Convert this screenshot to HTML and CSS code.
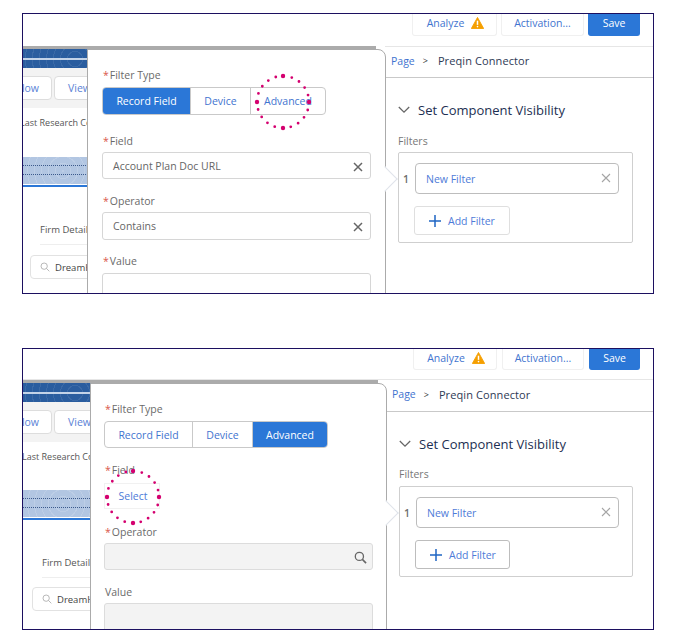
FILE: index.html
```html
<!DOCTYPE html>
<html lang="en">
<head>
<meta charset="utf-8">
<title>Set Component Visibility</title>
<link rel="stylesheet" href="styles.css">
</head>
<body>
<main class="sheet">

<section class="shot shot-a">
  <header class="topbar">
    <button class="tbtn tbtn-analyze">Analyze
      <svg class="warn" viewBox="0 0 14 13"><path d="M7 .5 13.7 12.5H.3Z" fill="#f59f00" stroke="#f59f00" stroke-linejoin="round"/><path d="M7 4v4.5" stroke="#fff" stroke-width="1.6"/><circle cx="7" cy="10.4" r=".9" fill="#fff"/></svg>
    </button>
    <button class="tbtn tbtn-activation">Activation...</button>
    <button class="tbtn tbtn-save">Save</button>
  </header>
  <div class="work">
    <div class="stage">
      <div class="hero"><i class="hero-line"></i></div>
      <div class="actions"><span class="abtn abtn-follow">Follow</span><span class="abtn abtn-view">View</span></div>
      <p class="research">Last Research Contact</p>
      <div class="band"><i class="band-dots"></i><i class="band-dots"></i></div>
      <p class="firm">Firm Details</p>
      <div class="search">
        <svg class="search-ico" viewBox="0 0 12 12"><circle cx="5" cy="5" r="3.8" fill="none" stroke="#aaa"/><path d="m7.8 7.8 3.4 3.4" stroke="#aaa"/></svg>
        <span>DreamHost</span>
      </div>
    </div>
    <aside class="props">
      <nav class="crumbs"><a>Page</a><b>&gt;</b><span>Preqin Connector</span></nav>
      <div class="section">
        <h2 class="title"><svg class="chev" viewBox="0 0 12 8"><path d="m.8 1 5.2 5.2L11.2 1" fill="none" stroke="#666" stroke-width="1.3"/></svg>Set Component Visibility</h2>
        <p class="filters-label">Filters</p>
        <div class="filters">
          <div class="filter-row"><span class="num">1</span>
            <div class="filter-card"><span>New Filter</span>
              <svg class="x-light" viewBox="0 0 10 10"><path d="m1 1 8 8M9 1 1 9" stroke="#a5a5a5" stroke-width="1.1"/></svg>
            </div>
          </div>
          <button class="add"><svg class="plus" viewBox="0 0 12 12"><path d="M6 0v12M0 6h12" stroke="#1f66c4" stroke-width="1.5"/></svg>Add Filter</button>
        </div>
      </div>
    </aside>
  </div>
  <div class="pop">
    <i class="nub"></i>
    <label class="lab"><em>*</em>Filter Type</label>
    <div class="seg">
      <span class="seg-i seg-record on">Record Field</span><span class="seg-i seg-device">Device</span><span class="seg-i seg-adv">Advanced</span>
    </div>
    <label class="lab lab-field"><em>*</em>Field</label>
    <div class="inp inp-field"><span>Account Plan Doc URL</span>
      <svg class="x-dark" viewBox="0 0 10 10"><path d="m1 1 8 8M9 1 1 9" stroke="#666" stroke-width="1.5"/></svg>
    </div>
    <label class="lab lab-op"><em>*</em>Operator</label>
    <div class="inp inp-op"><span>Contains</span>
      <svg class="x-dark" viewBox="0 0 10 10"><path d="m1 1 8 8M9 1 1 9" stroke="#666" stroke-width="1.5"/></svg>
    </div>
    <label class="lab lab-val"><em>*</em>Value</label>
    <div class="inp inp-val"></div>
  </div>
  <svg class="ring ring-a" viewBox="0 0 60 60"><circle class="ring-dots" cx="30" cy="30" r="26"/><circle class="ring-big" cx="30" cy="4" r="2.2"/><circle class="ring-big" cx="30" cy="56" r="2.2"/><circle class="ring-big" cx="4" cy="30" r="2.2"/><circle class="ring-big" cx="56" cy="30" r="2.2"/></svg>
</section>

<section class="shot shot-b">
  <header class="topbar">
    <button class="tbtn tbtn-analyze">Analyze
      <svg class="warn" viewBox="0 0 14 13"><path d="M7 .5 13.7 12.5H.3Z" fill="#f59f00" stroke="#f59f00" stroke-linejoin="round"/><path d="M7 4v4.5" stroke="#fff" stroke-width="1.6"/><circle cx="7" cy="10.4" r=".9" fill="#fff"/></svg>
    </button>
    <button class="tbtn tbtn-activation">Activation...</button>
    <button class="tbtn tbtn-save">Save</button>
  </header>
  <div class="work">
    <div class="stage">
      <div class="hero"><i class="hero-line"></i></div>
      <div class="actions"><span class="abtn abtn-follow">Follow</span><span class="abtn abtn-view">View</span></div>
      <p class="research">Last Research Contact</p>
      <div class="band"><i class="band-dots"></i><i class="band-dots"></i></div>
      <p class="firm">Firm Details</p>
      <div class="search">
        <svg class="search-ico" viewBox="0 0 12 12"><circle cx="5" cy="5" r="3.8" fill="none" stroke="#aaa"/><path d="m7.8 7.8 3.4 3.4" stroke="#aaa"/></svg>
        <span>DreamHost</span>
      </div>
    </div>
    <aside class="props">
      <nav class="crumbs"><a>Page</a><b>&gt;</b><span>Preqin Connector</span></nav>
      <div class="section">
        <h2 class="title"><svg class="chev" viewBox="0 0 12 8"><path d="m.8 1 5.2 5.2L11.2 1" fill="none" stroke="#666" stroke-width="1.3"/></svg>Set Component Visibility</h2>
        <p class="filters-label">Filters</p>
        <div class="filters">
          <div class="filter-row"><span class="num">1</span>
            <div class="filter-card"><span>New Filter</span>
              <svg class="x-light" viewBox="0 0 10 10"><path d="m1 1 8 8M9 1 1 9" stroke="#a5a5a5" stroke-width="1.1"/></svg>
            </div>
          </div>
          <button class="add"><svg class="plus" viewBox="0 0 12 12"><path d="M6 0v12M0 6h12" stroke="#1f66c4" stroke-width="1.5"/></svg>Add Filter</button>
        </div>
      </div>
    </aside>
  </div>
  <div class="pop">
    <i class="nub"></i>
    <label class="lab"><em>*</em>Filter Type</label>
    <div class="seg">
      <span class="seg-i seg-record">Record Field</span><span class="seg-i seg-device">Device</span><span class="seg-i seg-adv on">Advanced</span>
    </div>
    <label class="lab lab-field"><em>*</em>Field</label>
    <div class="select-box">Select</div>
    <label class="lab lab-op"><em>*</em>Operator</label>
    <div class="inp inp-op inp-off">
      <svg class="mag" viewBox="0 0 14 14"><circle cx="5.8" cy="5.8" r="4.4" fill="none" stroke="#666" stroke-width="1.4"/><path d="m9 9 4 4" stroke="#666" stroke-width="1.7"/></svg>
    </div>
    <label class="lab lab-val">Value</label>
    <div class="inp inp-val inp-off"></div>
  </div>
  <svg class="ring ring-b" viewBox="0 0 60 60"><circle class="ring-dots" cx="30" cy="30" r="26"/><circle class="ring-big" cx="30" cy="4" r="2.2"/><circle class="ring-big" cx="30" cy="56" r="2.2"/><circle class="ring-big" cx="4" cy="30" r="2.2"/><circle class="ring-big" cx="56" cy="30" r="2.2"/></svg>
</section>

</main>
</body>
</html>
```

FILE: styles.css
```css
* { box-sizing: border-box; }

html, body { margin: 0; background: #fff; }

body {
  font-family: "Open Sans", "Noto Sans", sans-serif;
  font-size: 10.5px;
  color: #555;
}

.sheet {
  display: flex;
  flex-direction: column;
  gap: 54px;
  padding: 13px 0 0 22px;
}

.shot {
  position: relative;
  width: 632px;
  height: 281px;
  border: 1px solid #1c1060;
  overflow: hidden;
  background: #fff;
}

.shot-b { height: 282px; }

/* top bar */
.topbar {
  display: flex;
  justify-content: flex-end;
  align-items: flex-start;
  gap: 4px;
  height: 32px;
  padding-right: 13px;
}

.shot-b .topbar { height: 31px; gap: 5px; border-bottom: 1px solid #e6e6e6; }

.tbtn {
  display: flex;
  align-items: center;
  justify-content: center;
  height: 22px;
  padding: 0 0 3px;
  font: inherit;
  color: #3f74cf;
  background: #fff;
  border: 1px solid #f0f0f0;
  border-top: 0;
  border-radius: 0 0 3px 3px;
}

.shot-b .tbtn { height: 21px; }

.tbtn-analyze { width: 85px; gap: 7px; padding-left: 2px; }
.tbtn-activation { width: 83px; }
.tbtn-save { width: 52px; color: #fff; background: #2b77d7; border-color: #2b77d7; }
.shot-b .tbtn-analyze { width: 84px; }
.shot-b .tbtn-activation { width: 82px; }
.shot-b .tbtn-save { width: 51px; }

.warn { width: 13px; height: 12px; }

/* work area */
.work {
  display: grid;
  grid-template-columns: 362px 1fr;
  height: 248px;
}

.shot-b .work { grid-template-columns: 364px 1fr; }

.stage {
  margin-right: 9px;
  border-top: 3px solid #ababab;
  overflow: hidden;
}

.hero {
  height: 19px;
  padding-top: 9px;
  background:
    repeating-radial-gradient(circle at 52px 10px, rgba(255,255,255,.08) 0 1px, transparent 1px 7px),
    #2a5d9f;
}

.hero-line {
  display: block;
  height: 2px;
  background: #c3d3e8;
}

.actions {
  display: flex;
  gap: 2px;
  height: 40px;
  padding-top: 8px;
  margin-left: -22px;
  background: #f3f3f3;
}

.abtn {
  display: flex;
  align-items: center;
  justify-content: flex-end;
  height: 24px;
  padding-right: 12px;
  color: #5a82d6;
  background: #fff;
  border: 1px solid #ddd;
  border-radius: 4px;
}

.abtn-follow { width: 51px; }
.abtn-view { width: 60px; justify-content: flex-start; padding-left: 13px; }

.research {
  margin: 7px 0 0 -3px;
  height: 16px;
  line-height: 16px;
  font-size: 9px;
  white-space: nowrap;
}

.shot-b .research { margin-left: -1px; }

.band {
  height: 30px;
  margin-top: 26px;
  padding-top: 8px;
  background:
    repeating-radial-gradient(circle at 40px 14px, rgba(255,255,255,.14) 0 1px, transparent 1px 7px),
    #b2c6e2;
  border-bottom: 2px solid #2b77d7;
  box-shadow: inset 0 -1px 0 #fff;
}

.shot-b .band { margin-top: 25px; }

.band-dots {
  display: block;
  height: 9px;
  border-top: 1px dotted #3c5a8c;
}

.firm {
  height: 23px;
  margin: 35px 0 0 17px;
  line-height: 16px;
  font-size: 9.5px;
  white-space: nowrap;
  border-bottom: 1px solid #eee;
}

.search {
  display: flex;
  align-items: center;
  gap: 5px;
  width: 200px;
  height: 24px;
  margin: 10px 0 0 7px;
  padding-left: 9px;
  font-size: 9.5px;
  color: #444;
  border: 1px solid #e2e2e2;
  border-radius: 4px;
}

.shot-b .firm { margin-left: 19px; }
.shot-b .search { margin: 9px 0 0 9px; }

.search-ico { width: 10px; height: 10px; }

/* right column */
.shot-a .props { border-top: 1px solid #e6e6e6; }

.crumbs {
  display: flex;
  align-items: center;
  gap: 8px;
  height: 31px;
  padding: 0 0 3px 6px;
  border-bottom: 1px solid #c9c9c9;
  color: #444;
}

.shot-b .crumbs { height: 32px; padding-left: 5px; }

.crumbs a { color: #3f74cf; }
.crumbs b { font-weight: 400; font-size: 9px; color: #333; }
.crumbs span { margin-left: 2px; font-size: 11px; letter-spacing: .1px; color: #2e3a55; }

.section { padding: 22px 20px 0 13px; }
.shot-b .section { padding-left: 12px; }

.title {
  display: flex;
  align-items: center;
  gap: 8px;
  margin: 0;
  height: 20px;
  font-size: 13px;
  font-weight: 400;
  color: #1d2f52;
}

.chev { width: 12px; height: 8px; }

.filters-label {
  height: 18px;
  margin: 12px 0 2px;
  line-height: 18px;
  color: #777;
}

.shot-b .filters-label { margin: 11px 0 3px; }

.filters {
  height: 91px;
  padding: 10px 13px 8px 4px;
  border: 1px solid #cfcfcf;
  border-radius: 2px;
}

.filter-row {
  display: flex;
  align-items: center;
  gap: 7px;
}

.num { width: 5px; font-weight: 600; color: #6f6f6f; }

.filter-card {
  position: relative;
  display: flex;
  align-items: center;
  flex: 1;
  height: 31px;
  padding-left: 10px;
  color: #4e7bd8;
  border: 1px solid #bdbdbd;
  border-radius: 4px;
}

.x-light {
  position: absolute;
  top: 9px;
  right: 7px;
  width: 10px;
  height: 10px;
}

.add {
  display: flex;
  align-items: center;
  gap: 7px;
  width: 96px;
  height: 29px;
  margin: 12px 0 0 11px;
  padding: 0 0 0 14px;
  font: inherit;
  color: #4e7bd8;
  background: #fff;
  border: 1px solid #dfdfdf;
  border-radius: 3px;
}

.shot-b .add { width: 95px; border-color: #bdbdbd; }

.plus { width: 12px; height: 12px; }

/* floating popover */
.pop {
  position: absolute;
  top: 35px;
  left: 64px;
  width: 299px;
  height: 260px;
  padding: 17px 14px 0 14px;
  background: #fff;
  border: 1px solid #ababab;
  border-radius: 0 8px 0 0;
}

.shot-b .pop {
  top: 34px;
  left: 67px;
  width: 297px;
  padding-left: 13px;
}

.nub {
  position: absolute;
  top: 120px;
  right: -9px;
  width: 18px;
  height: 18px;
  background: #fff;
  border-top: 1px solid #dfe3ea;
  border-right: 1px solid #dfe3ea;
  transform: rotate(45deg);
}

.lab {
  display: block;
  height: 16px;
  padding-left: 1px;
  line-height: 16px;
  color: #6a6a6a;
}

.lab em {
  margin-right: 1px;
  font-style: normal;
  color: #d9564a;
}

.seg {
  display: flex;
  width: 224px;
  height: 28px;
  margin-top: 4px;
  border: 1px solid #c9c9c9;
  border-radius: 4px;
  overflow: hidden;
}

.shot-b .seg { height: 27px; }

.seg-i {
  display: flex;
  align-items: center;
  justify-content: center;
  color: #3f74cf;
  border-right: 1px solid #c9c9c9;
}

.seg-record { width: 88px; }
.seg-device { width: 60px; }
.seg-adv { flex: 1; border-right: 0; justify-content: flex-start; padding-left: 13px; }
.seg-i.on { color: #fff; background: #2b77d7; }

.lab-field { margin-top: 18px; }
.lab-op { margin-top: 14px; }
.lab-val { margin-top: 13px; }

.shot-b .lab-field { margin-top: 14px; }
.shot-b .lab-op { margin-top: 15px; }
.shot-b .lab-val { margin-top: 14px; }

.inp {
  position: relative;
  display: flex;
  align-items: center;
  width: 269px;
  margin-top: 3px;
  padding-left: 10px;
  color: #666;
  background: #fff;
  border: 1px solid #d6d6d6;
  border-radius: 3px;
}

.inp-field { height: 27px; }
.inp-op { height: 28px; }
.inp-val { height: 40px; margin-top: 4px; }
.inp-off { background: #f3f3f3; border-color: #dcdcdc; }
.shot-b .inp-op { height: 27px; }
.shot-b .inp-val { margin-top: 3px; }

.x-dark {
  position: absolute;
  top: 9px;
  right: 7px;
  width: 10px;
  height: 10px;
}

.mag {
  position: absolute;
  top: 7px;
  right: 5px;
  width: 13px;
  height: 13px;
}

.select-box {
  display: flex;
  align-items: center;
  justify-content: center;
  width: 56px;
  height: 26px;
  margin-top: 5px;
  padding-left: 2px;
  color: #4e7bd8;
  border: 1px solid #f1f1f1;
}

/* annotation ring */
.ring {
  position: absolute;
  width: 60px;
  height: 60px;
}

.ring-a { top: 58px; left: 230px; }
.ring-b { top: 118px; left: 80px; }

.ring-dots {
  fill: none;
  stroke: #d4006f;
  stroke-width: 2.8;
  stroke-linecap: round;
  stroke-dasharray: 0 8.168;
}

.ring-big { fill: #d4006f; }
```
